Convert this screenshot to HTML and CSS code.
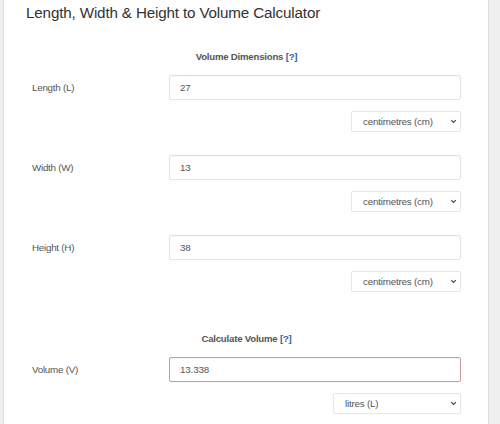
FILE: index.html
```html
<!DOCTYPE html>
<html lang="en">
<head>
<meta charset="utf-8">
<title>Length, Width &amp; Height to Volume Calculator</title>
<link rel="stylesheet" href="styles.css">
</head>
<body>
<div class="panel">
  <h1 class="title">Length, Width &amp; Height to Volume Calculator</h1>

  <div class="section-head">Volume Dimensions <span class="help">[?]</span></div>

  <div class="row">
    <div class="label">Length (L)</div>
    <div class="field">
      <div class="input">27</div>
      <div class="select sel-cm"><span>centimetres (cm)</span><svg class="chev" width="7" height="5" viewBox="0 0 7 5"><path d="M1.2 1.2 L3.5 3.5 L5.8 1.2" fill="none" stroke="#444" stroke-width="1.2"/></svg></div>
    </div>
  </div>

  <div class="row">
    <div class="label">Width (W)</div>
    <div class="field">
      <div class="input">13</div>
      <div class="select sel-cm"><span>centimetres (cm)</span><svg class="chev" width="7" height="5" viewBox="0 0 7 5"><path d="M1.2 1.2 L3.5 3.5 L5.8 1.2" fill="none" stroke="#444" stroke-width="1.2"/></svg></div>
    </div>
  </div>

  <div class="row">
    <div class="label">Height (H)</div>
    <div class="field">
      <div class="input">38</div>
      <div class="select sel-cm"><span>centimetres (cm)</span><svg class="chev" width="7" height="5" viewBox="0 0 7 5"><path d="M1.2 1.2 L3.5 3.5 L5.8 1.2" fill="none" stroke="#444" stroke-width="1.2"/></svg></div>
    </div>
  </div>

  <div class="section-head calc-head">Calculate Volume <span class="help">[?]</span></div>

  <div class="row">
    <div class="label">Volume (V)</div>
    <div class="field">
      <div class="input result">13.338</div>
      <div class="select sel-l"><span>litres (L)</span><svg class="chev" width="7" height="5" viewBox="0 0 7 5"><path d="M1.2 1.2 L3.5 3.5 L5.8 1.2" fill="none" stroke="#444" stroke-width="1.2"/></svg></div>
    </div>
  </div>
</div>
</body>
</html>
```

FILE: styles.css
```css
html, body {
  margin: 0;
  padding: 0;
}
body {
  background: #efefef;
  font-family: "Liberation Sans", Arial, sans-serif;
  color: #555;
  height: 424px;
  overflow: hidden;
}
.panel {
  margin-left: 3px;
  width: 486px;
  min-height: 424px;
  background: #fff;
  border-left: 1px solid #dcdcdc;
  border-right: 1px solid #dcdcdc;
  padding: 0 27px 0 22px;
  box-sizing: border-box;
}
.title {
  margin: 0;
  padding-top: 3px;
  font-size: 15.2px;
  letter-spacing: -0.15px;
  line-height: 20px;
  font-weight: normal;
  color: #333;
}
.section-head {
  margin-top: 27px;
  margin-left: 6px;
  text-align: center;
  font-size: 9.6px;
  letter-spacing: -0.2px;
  line-height: 14px;
  font-weight: bold;
  color: #555;
}
.help {
  color: #2f62a8;
}
.calc-head {
  margin-top: 40px;
}
.row {
  display: flex;
  padding-left: 6px;
  margin-top: 11px;
}
.row + .row {
  margin-top: 23px;
}
.label {
  width: 137px;
  flex: none;
  font-size: 9.8px;
  letter-spacing: -0.25px;
  line-height: 25px;
  color: #555;
}
.field {
  flex: 1;
  display: flex;
  flex-direction: column;
  align-items: flex-end;
  gap: 11px;
}
.input {
  align-self: stretch;
  height: 25px;
  box-sizing: border-box;
  border: 1px solid #e2e2e2;
  border-radius: 2px;
  padding-left: 10px;
  font-size: 9.8px;
  letter-spacing: -0.15px;
  line-height: 23px;
  color: #555;
  box-shadow: inset 0 1px 1px rgba(0,0,0,0.03);
}
.input.result {
  border-color: #c9999c;
}
.select {
  height: 21px;
  box-sizing: border-box;
  border: 1px solid #e6e6e6;
  border-radius: 2px;
  display: flex;
  align-items: center;
  justify-content: space-between;
  font-size: 9.8px;
  letter-spacing: -0.2px;
  color: #555;
  padding: 0 3px 0 11px;
}
.sel-cm {
  width: 110px;
}
.sel-l {
  width: 128px;
}
.chev {
  display: block;
}
```
